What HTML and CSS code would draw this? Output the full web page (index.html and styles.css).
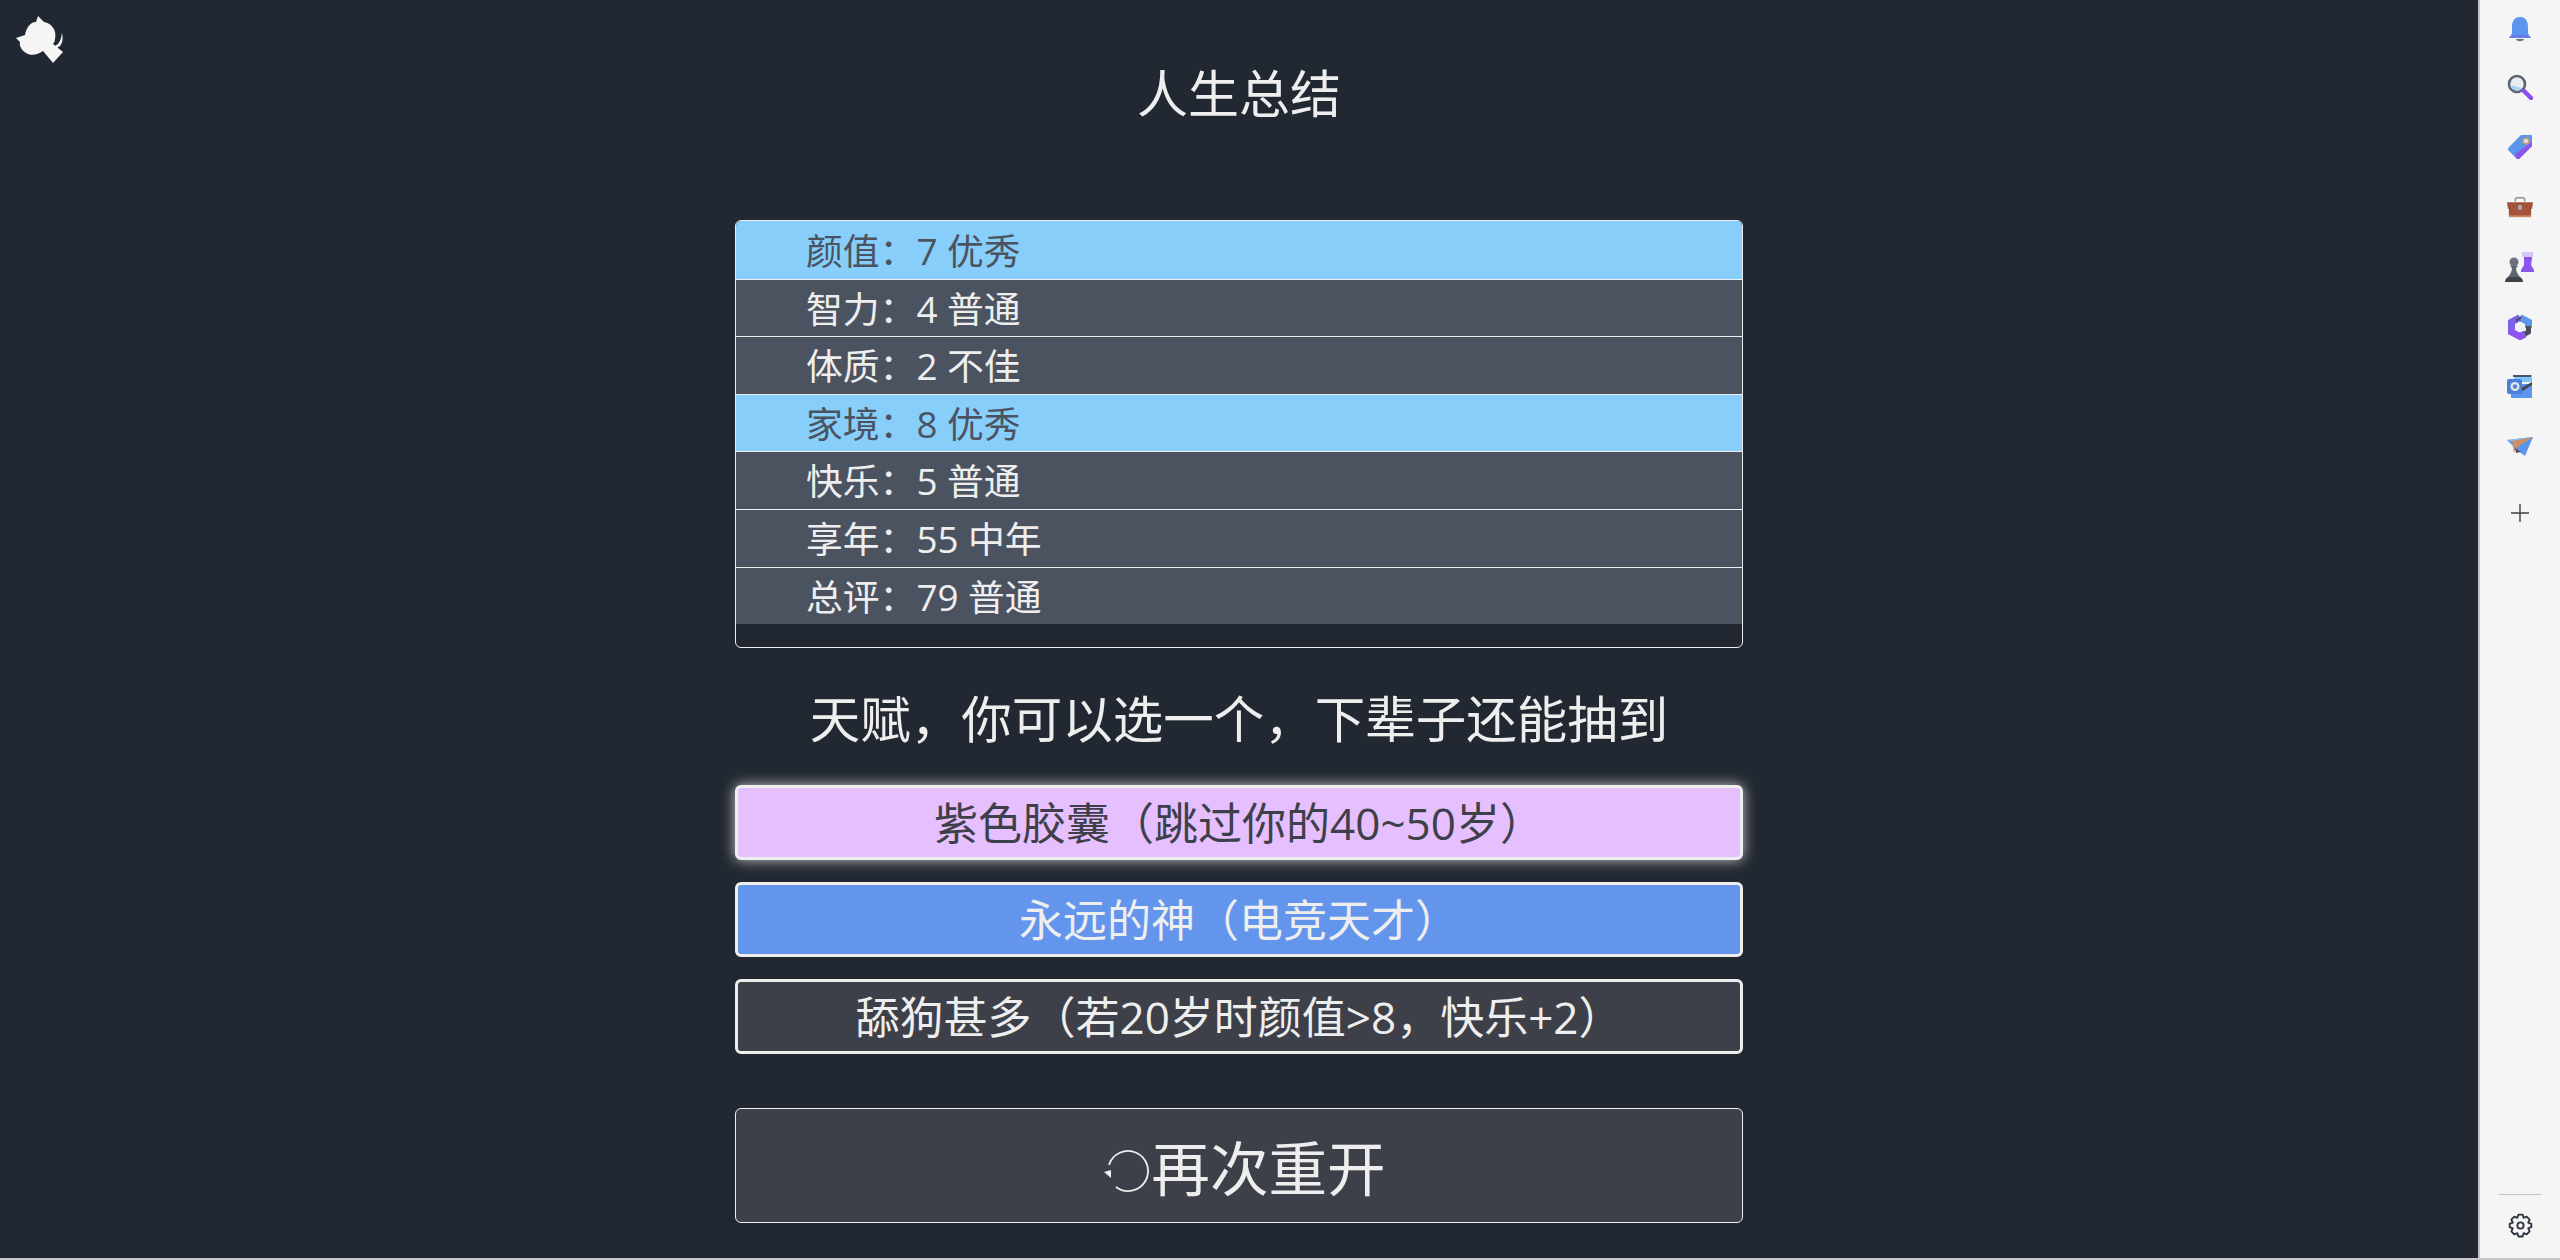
FILE: index.html
```html
<!DOCTYPE html>
<html lang="zh-CN">
<head>
  <meta charset="UTF-8">
  <title>人生总结</title>
  <link rel="stylesheet" href="styles.css">
</head>
<body>

  <div class="app">
    <main class="main">
      <svg class="logo" viewBox="0 0 70 70" aria-hidden="true">
        <path d="M38 16 L44 22 C52 23 57 31 55 39 C55 41 54 43 53 44 L63 52 L53 63 L43 51 C38 55 30 56 26 53 C21 50 19 45 20 42 L16 38 L25 35 C26 27 32 21 36 22 Z"/>
        <path d="M62 33 C61 38 61 40 58 44 L53 47 L55 49 L60 46 C63 42 63 38 62 33 Z"/>
      </svg>

      <h1 class="title">人生总结</h1>

      <ul class="summary">
        <li class="row row-good">颜值&#xFF1A;7 优秀</li>
        <li class="row">智力&#xFF1A;4 普通</li>
        <li class="row">体质&#xFF1A;2 不佳</li>
        <li class="row row-good">家境&#xFF1A;8 优秀</li>
        <li class="row">快乐&#xFF1A;5 普通</li>
        <li class="row">享年&#xFF1A;55 中年</li>
        <li class="row">总评&#xFF1A;79 普通</li>
      </ul>

      <h2 class="subtitle">天赋&#xFF0C;你可以选一个&#xFF0C;下辈子还能抽到</h2>

      <ul class="talents">
        <li class="talent talent-purple">紫色胶囊&#xFF08;跳过你的40~50岁&#xFF09;</li>
        <li class="talent talent-blue">永远的神&#xFF08;电竞天才&#xFF09;</li>
        <li class="talent">舔狗甚多&#xFF08;若20岁时颜值&gt;8&#xFF0C;快乐+2&#xFF09;</li>
      </ul>

      <button type="button" class="btn-restart">
        <svg class="restart-icon" viewBox="0 0 59 59" aria-hidden="true">
          <path d="M17 29 A20 20 0 1 1 24 51" fill="none" stroke="#eee" stroke-width="1.8"/>
          <path d="M12 36 L19 42 L19 34 Z" fill="#eee"/>
        </svg>再次重开
      </button>
    </main>

    <aside class="sidebar">
      <div class="side-icons">
        <a class="side-icon side-icon-bell" href="#">
          <svg viewBox="0 0 26 26"><path d="M13 1 C19 1 21 6 21 11 L21 16 C21 19 23 20 24 22 L2 22 C3 20 5 19 5 16 L5 11 C5 6 7 1 13 1 Z" fill="#5b95ee"/><path d="M9 23 L17 23 C16 26 10 26 9 23 Z" fill="#6b7280"/><path d="M5 19 L21 19 L24 22 L2 22 Z" fill="#6a7bea"/></svg>
        </a>
        <a class="side-icon" href="#">
          <svg viewBox="0 0 26 26"><circle cx="10" cy="10" r="8" fill="#e8edf0" stroke="#5d6470" stroke-width="2.6"/><path d="M3 11 A7 7 0 0 0 15 14 Z" fill="#a8d4f5"/><path d="M17 17 L24 24" stroke="#8b4cf0" stroke-width="4.4" stroke-linecap="round"/></svg>
        </a>
        <a class="side-icon" href="#">
          <svg viewBox="0 0 26 26"><path d="M14 1 L24 1 C25 1 25 2 25 3 L25 12 L12 25 C11 25 10 25 9 24 L1 16 C1 15 1 14 2 13 Z" fill="#5b95ee"/><path d="M8 20 L25 8 L25 12 L12 25 C11 25 10 25 9 24 Z" fill="#8b55ee"/><circle cx="19" cy="7" r="3" fill="#d8dde2" stroke="#c8956a" stroke-width="1.4"/></svg>
        </a>
        <a class="side-icon" href="#">
          <svg viewBox="0 0 28 22"><path d="M9 5 L9 3 C9 1 10 1 11 1 L17 1 C18 1 19 1 19 3 L19 5" fill="none" stroke="#8c8f94" stroke-width="1.6"/><path d="M0 6 L28 6 L27 13 L1 13 Z" fill="#a5523c"/><path d="M2 12 L26 12 L26 20 C26 21 25 21 25 21 L3 21 C3 21 2 21 2 20 Z" fill="#a5523c"/><path d="M2 20 L26 20 L26 22 L2 22 Z" fill="#c98b64"/><path d="M12 9 L16 9 L16 14 L12 14 Z" fill="#a9adb2"/></svg>
        </a>
        <a class="side-icon side-icon-chess" href="#">
          <svg viewBox="0 0 30 32"><path d="M17 1 L19 1 L20 3 L22 1 L24 3 L26 1 L28 1 L27 7 L26 14 L29 19 L29 21 L16 21 L16 19 L19 14 L19 7 Z" fill="#8b55ee"/><path d="M17 1 L28 1 L27 6 L19 6 Z" fill="#d9c5f7"/><circle cx="9" cy="11" r="4.5" fill="#6b7280"/><path d="M5 15 L13 15 L11 17 C11 21 13 23 15 26 L3 26 C5 23 7 21 7 17 Z" fill="#5f6570"/><path d="M0 31 C0 28 2 26 4 26 L14 26 C16 26 18 28 18 31 Z" fill="#3d424b"/></svg>
        </a>
        <a class="side-icon" href="#">
          <svg viewBox="0 0 26 26" fill="none" stroke-width="7"><path d="M13 3.5 L21.5 8 L21.5 14" stroke="#5b95ee"/><path d="M21.5 12 L21.5 18 L16 21" stroke="#4a4f5a" stroke-width="5"/><path d="M18 20 L13 22.5 L4.5 18 L4.5 14" stroke="#8b55ee"/><path d="M4.5 15 L4.5 8 L13 3.5" stroke="#7b62e8"/><path d="M9 7 L14 3" stroke="#4a4f5a" stroke-width="2"/><circle cx="13" cy="13" r="4.5" fill="#f5f5f5" stroke="none"/></svg>
        </a>
        <a class="side-icon" href="#">
          <svg viewBox="0 0 26 26"><path d="M7 1 L25 1 L25 8 L7 8 Z" fill="#7ec4fb"/><path d="M6 1 L24 1 L24 3 L6 3 Z" fill="#4a5568"/><path d="M4 10 L25 10 L25 24 L4 24 Z" fill="#5b95ee"/><path d="M14 14 L25 8 L25 11 L14 18 Z" fill="#3f4754"/><rect x="0" y="5" width="15" height="15" rx="2" fill="#4f7fdd"/><circle cx="8" cy="12.5" r="4.5" fill="#dfe7f2"/><circle cx="8" cy="12.5" r="2.2" fill="#5b7fc5"/></svg>
        </a>
        <a class="side-icon side-icon-plane" href="#">
          <svg viewBox="0 0 26 20"><path d="M0 3 L26 0 L18 19 L10 13 Z" fill="#5b95ee"/><path d="M0 3 L26 0 L6 5 Z" fill="#7ec4fb"/><path d="M5 4 L26 0 L9 11 L7 16 Z" fill="#c98f66"/><path d="M8 11 L14 15 L9 16 Z" fill="#4a4f5a"/></svg>
        </a>
        <a class="side-icon side-icon-add" href="#">
          <svg viewBox="0 0 20 20"><path d="M10 1 L10 19 M1 10 L19 10" stroke="#3c4043" stroke-width="1.4"/></svg>
        </a>
      </div>

      <div class="side-bottom">
        <a class="side-icon side-icon-gear" href="#">
          <svg viewBox="0 0 24 24" fill="none" stroke="#2f3540" stroke-width="1.8" stroke-linejoin="round"><circle cx="12" cy="12" r="3"/><path d="M10 1.5 H14 L15 4.6 L17.9 3.5 L20.8 6.4 L19.4 9.2 L22.4 10.4 V13.6 L19.4 14.8 L20.8 17.6 L17.9 20.5 L15 19.4 L14 22.5 H10 L9 19.4 L6.1 20.5 L3.2 17.6 L4.6 14.8 L1.6 13.6 V10.4 L4.6 9.2 L3.2 6.4 L6.1 3.5 L9 4.6 Z"/></svg>
        </a>
      </div>
    </aside>
  </div>

</body>
</html>
```

FILE: styles.css
```css
* {
  box-sizing: border-box;
}
html,
body {
  margin: 0;
  height: 100%;
}
body {
  font-family: "Open Sans", "Noto Sans CJK SC", sans-serif;
  overflow: hidden;
  background: #c8c8c8;
}
ul {
  list-style: none;
  margin: 0;
  padding: 0;
}
.app {
  display: flex;
  height: 1258px;
}
.main {
  position: relative;
  flex: 1;
  display: flex;
  flex-direction: column;
  align-items: center;
  background: #222831;
  color: #eeeeee;
}
.logo {
  position: absolute;
  top: 0;
  left: 0;
  width: 70px;
  height: 70px;
  fill: #f5f5f5;
}
.title {
  margin: 60px 0 0;
  height: 160px;
  font-size: 51px;
  font-weight: 400;
  line-height: 66px;
}
.summary {
  width: 1008px;
  height: 428px;
  border: 1px solid #eeeeee;
  border-radius: 6px;
  overflow: hidden;
}
.row {
  height: 57.6px;
  padding-left: 70px;
  border-top: 1px solid #eeeeee;
  background: #4b5361;
  font-size: 36.8px;
  line-height: 59px;
}
.row:first-child {
  border-top: none;
  line-height: 60px;
}
.row-good {
  background: #87cefa;
  color: #4b5361;
}
.subtitle {
  margin: 35px 0 30px;
  font-size: 50.5px;
  font-weight: 400;
  line-height: 72px;
}
.talents {
  width: 1008px;
  display: flex;
  flex-direction: column;
  gap: 22px;
}
.talent {
  height: 75px;
  border: 3px solid #eeeeee;
  border-radius: 6px;
  background: #3e4049;
  font-size: 44px;
  line-height: 71px;
  text-align: center;
}
.talent-purple {
  background: #e6bfff;
  color: #3e4049;
  box-shadow: 0 0 14px rgba(238, 238, 238, 0.8);
}
.talent-blue {
  background: #6495ed;
}
.btn-restart {
  margin-top: 54px;
  width: 1008px;
  height: 115px;
  border: 1px solid #eeeeee;
  border-radius: 6px;
  background: #3e4049;
  color: #eeeeee;
  font: inherit;
  font-size: 58.6px;
  display: flex;
  align-items: center;
  justify-content: center;
}
.restart-icon {
  width: 59px;
  height: 59px;
}
.sidebar {
  width: 82px;
  display: flex;
  flex-direction: column;
  justify-content: space-between;
  border-left: 2px solid #c4c4c4;
  background: #f5f5f5;
}
.side-icons {
  display: flex;
  flex-direction: column;
}
.side-icon {
  height: 60px;
  display: flex;
  align-items: center;
  justify-content: center;
}
.side-icon svg {
  width: 26px;
  height: 26px;
}
.side-icon-bell {
  height: 57px;
}
.side-icon-chess svg {
  width: 30px;
  height: 32px;
}
.side-icon-plane svg {
  height: 20px;
}
.side-icon-add {
  margin-top: 6px;
}
.side-icon-add svg {
  width: 20px;
  height: 20px;
}
.side-bottom {
  margin: 0 19px;
  padding-bottom: 3px;
  border-top: 1px solid #c4c4c4;
  display: flex;
  flex-direction: column;
}
.side-icon-gear svg {
  width: 25px;
  height: 25px;
}
```
